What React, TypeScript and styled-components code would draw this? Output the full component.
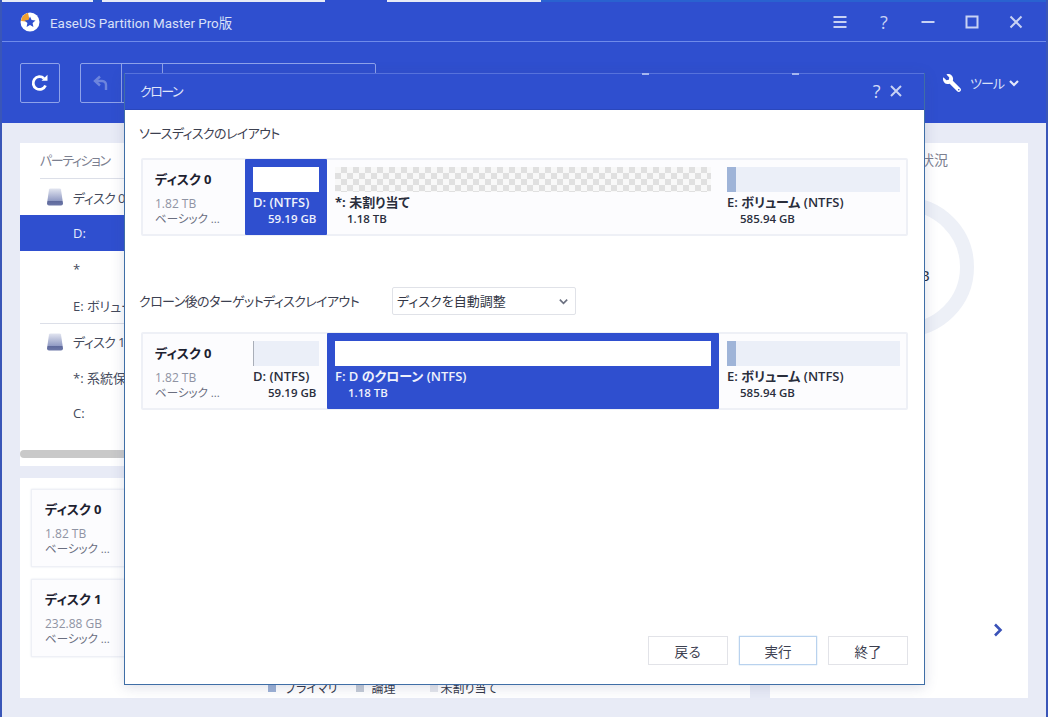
import React from "react";
import styled, { createGlobalStyle } from "styled-components";
import { FaWrench } from "react-icons/fa";

const Global = createGlobalStyle`
  html, body { margin: 0; padding: 0; background: #e8ebf6; }
  * { box-sizing: border-box; }
  body { font-family: "Open Sans", "Noto Sans CJK JP", sans-serif; font-feature-settings: "palt"; }
`;

const BLUE = "#2f4fcf";

const Page = styled.div`
  position: relative;
  width: 1048px;
  height: 717px;
  overflow: hidden;
  background: #e8ebf6;
  border-left: 2px solid #3a56b8;
  border-right: 2px solid #3a56b8;
  display: flex;
  flex-direction: column;
`;

const TopStrip = styled.div`
  height: 2px;
  margin: 0 -2px;
  flex: none;
  background: linear-gradient(
    90deg,
    #e8ebf6 0 93px,
    #2a55c8 93px 102px,
    #e8ebf6 102px 325px,
    #2f4fcf 325px 387px,
    #e8ebf6 387px 541px,
    #2a62d0 541px
  );
`;

const TitleBar = styled.header`
  height: 40px;
  flex: none;
  margin: 0 -2px;
  background: ${BLUE};
  border-bottom: 1px solid #6f8bea;
  display: flex;
  align-items: center;
  padding: 0 0 0 20px;
  color: #d9e0f8;
`;

const AppName = styled.span`
  margin-left: 10px;
  font-family: Roboto, "Noto Sans CJK JP", sans-serif;
  font-size: 13.4px;
`;

const WinControls = styled.div`
  margin-left: auto;
  display: flex;
  padding-right: 10px;
`;

const WinButton = styled.span`
  width: 44px;
  height: 24px;
  display: flex;
  align-items: center;
  justify-content: center;
  color: #c8d2f4;
  font-size: 18px;
`;

const Toolbar = styled.div`
  height: 81px;
  flex: none;
  margin: 0 -2px;
  background: ${BLUE};
  display: flex;
  align-items: center;
  padding: 0 28px 0 20px;
  position: relative;
`;

const ToolBtn = styled.div`
  width: 40px;
  height: 40px;
  border: 1px solid #8ea2ea;
  border-radius: 2px;
  display: flex;
  align-items: center;
  justify-content: center;
`;

const ToolGroup = styled.div`
  margin-left: 20px;
  width: 296px;
  height: 40px;
  border: 1px solid #8ea2ea;
  border-radius: 2px;
  display: flex;
`;

const GroupCell = styled.div`
  width: 41px;
  border-right: 1px solid #8ea2ea;
  display: flex;
  align-items: center;
  justify-content: center;
`;

const Spacer = styled.div`
  flex: 1;
`;

const PeekMark = styled.div<{ $left: number }>`
  position: absolute;
  z-index: 2;
  top: 31px;
  left: ${(p) => p.$left}px;
  width: 7px;
  height: 2px;
  background: #a5b6f0;
`;

const ToolMenu = styled.div`
  display: flex;
  align-items: center;
  color: #d9e0f8;
  font-size: 13px;
  letter-spacing: -1px;
`;

const ToolLabel = styled.span`
  margin: 0 4px 0 9px;
`;

const WrenchIcon = styled(FaWrench)`
  width: 18px;
  height: 18px;
  color: #fff;
  transform: scaleX(-1);
`;

const Main = styled.main`
  flex: 1;
  display: flex;
  gap: 20px;
  padding: 20px 18px 19px 18px;
  min-height: 0;
`;

const LeftCol = styled.div`
  width: 730px;
  flex: none;
  display: flex;
  flex-direction: column;
  gap: 12px;
`;

const TablePanel = styled.section`
  height: 323px;
  background: #fff;
  flex: none;
  position: relative;
  padding: 0 0 0 20px;
`;

const TableHead = styled.div`
  height: 36px;
  border-bottom: 1px solid #dcdfe8;
  font-size: 13px;
  letter-spacing: -1.4px;
  color: #7c8090;
  display: flex;
  align-items: center;
  padding-bottom: 2px;
`;

const DiskRow = styled.div<{ $lined?: boolean }>`
  height: 36px;
  display: flex;
  align-items: center;
  font-size: 13px;
  letter-spacing: -0.6px;
  color: #444a5c;
  gap: 10px;
  padding-left: 7px;
  ${(p) => (p.$lined ? "border-top: 1px solid #dcdfe8;" : "")}
`;

const PartRow = styled.div<{ $selected?: boolean }>`
  height: 36px;
  display: flex;
  align-items: center;
  font-size: 13px;
  padding-left: ${(p) => (p.$selected ? "53px" : "33px")};
  margin-left: ${(p) => (p.$selected ? "-20px" : "0")};
  color: ${(p) => (p.$selected ? "#e8ecfb" : "#444a5c")};
  background: ${(p) => (p.$selected ? BLUE : "transparent")};
`;

const Scrollbar = styled.div`
  position: absolute;
  left: 0;
  right: 0;
  top: 307px;
  height: 8px;
  background: #c9c9c9;
  border-radius: 4px;
`;

const CardsPanel = styled.section`
  flex: 1;
  background: #fff;
  padding: 11px;
  display: flex;
  flex-direction: column;
  gap: 12px;
  position: relative;
`;

const DiskCard = styled.div`
  height: 78px;
  width: 300px;
  border: 1px solid #eef0f6;
  background: #fcfcfe;
  box-shadow: 0 0 2px #e4e6ee;
  padding: 9px 13px;
`;

const DiskName = styled.div`
  font-size: 13px;
  font-weight: 700;
  color: #1d2130;
  line-height: 20px;
`;

const DiskSize = styled.div`
  font-size: 12px;
  color: #8f93a3;
  line-height: 15px;
  margin-top: 7px;
`;

const DiskType = styled.div`
  font-size: 11.5px;
  color: #6a6e80;
  line-height: 15px;
`;

const Legend = styled.div`
  position: absolute;
  left: 248px;
  top: 201px;
  display: flex;
  align-items: center;
  font-size: 12px;
  color: #333746;
`;

const Swatch = styled.span<{ $color: string; $gap: number; $after: number }>`
  width: 8px;
  height: 8px;
  background: ${(p) => p.$color};
  margin: 0 ${(p) => p.$after}px 0 ${(p) => p.$gap}px;
`;

const RightPanel = styled.section`
  flex: 1;
  background: #fff;
  position: relative;
  display: flex;
  flex-direction: column;
`;

const RightHead = styled.div`
  width: 178px;
  height: 36px;
  text-align: right;
  font-size: 14px;
  line-height: 34px;
  color: #7c8090;
`;

const DonutBox = styled.div`
  position: relative;
  width: 140px;
  height: 140px;
  margin: 18px 0 0 64px;
  border: 14px solid #edf0f7;
  border-radius: 50%;
  display: flex;
  align-items: center;
  justify-content: center;
  font-size: 15px;
  color: #2a2e3c;
  padding-top: 16px;
`;

const NextArrow = styled.div`
  position: absolute;
  left: 223px;
  top: 477px;
`;

/* dialog */
const Dialog = styled.div`
  position: absolute;
  left: 122px;
  top: 73px;
  width: 801px;
  height: 612px;
  background: #fff;
  border: 1px solid #3f6ea6;
  border-top: none;
  box-shadow: 0 2px 12px rgba(60, 70, 120, 0.18);
  display: flex;
  flex-direction: column;
`;

const DialogHead = styled.div`
  height: 37px;
  flex: none;
  background: ${BLUE};
  border-top: 1px solid #5672dc;
  border-bottom: 1px solid #2a47bc;
  display: flex;
  align-items: center;
  padding: 0 20px 2px 15px;
  color: #e0e6fa;
  font-size: 13px;
  letter-spacing: -1.5px;
`;

const DialogTitle = styled.span`
  flex: 1;
`;

const HeadIcons = styled.div`
  display: flex;
  gap: 9px;
  align-items: center;
  color: #d4dcf7;
  font-size: 18px;
`;

const DialogBody = styled.div`
  flex: 1;
  display: flex;
  flex-direction: column;
  padding: 0 16px 19px 16px;
`;

const SectionLabel = styled.div<{ $top: number }>`
  margin-top: ${(p) => p.$top}px;
  height: 20px;
  line-height: 20px;
  font-size: 13px;
  color: #3c4050;
  display: flex;
  align-items: center;
`;

const LabelText = styled.span`
  width: 251px;
  flex: none;
  margin-left: -2px;
  margin-right: 2px;
  white-space: nowrap;
  letter-spacing: -0.6px;
`;

const Select = styled.div`
  width: 184px;
  height: 28px;
  border: 1px solid #e0e2e8;
  border-radius: 2px;
  display: flex;
  align-items: center;
  justify-content: space-between;
  padding: 0 6px 0 4px;
  color: #333746;
  font-size: 13px;
  flex: none;
`;

const Layout = styled.div<{ $top: number }>`
  margin-top: ${(p) => p.$top}px;
  height: 78px;
  border: 2px solid #eef0f6;
  border-radius: 2px;
  background: #fcfcfe;
  display: flex;
  flex: none;
`;

const LayoutInfo = styled.div`
  width: 102px;
  flex: none;
  padding: 9px 0 0 12px;
`;

const Partition = styled.div<{ $width: number; $active?: boolean }>`
  width: ${(p) => p.$width}px;
  flex: none;
  margin: -1px 0;
  padding: 8px 8px 0 8px;
  background: ${(p) => (p.$active ? BLUE : "transparent")};
  color: ${(p) => (p.$active ? "#eef1fc" : "#2a2e3c")};
  border-radius: 1px;
`;

const Bar = styled.div<{ $kind: "white" | "free" | "used" | "thin" }>`
  height: 25px;
  background: ${(p) =>
    p.$kind === "white"
      ? "#fff"
      : p.$kind === "free"
        ? "conic-gradient(#e0e0e0 25%, #f8f8f8 0 50%, #e0e0e0 0 75%, #f8f8f8 0) 0 0 / 12px 12px"
        : p.$kind === "used"
          ? "linear-gradient(90deg, #9fb4d8 0 9px, #ebeff8 9px)"
          : "linear-gradient(90deg, #a9aeb8 0 1px, #ebeff8 1px)"};
`;

const PartName = styled.div<{ $bold?: boolean }>`
  margin-top: 2px;
  font-size: 13px;
  line-height: 17px;
  font-weight: ${(p) => (p.$bold ? 700 : 600)};
  white-space: nowrap;
`;

const PartSize = styled.div<{ $indent: number }>`
  font-size: 11.5px;
  line-height: 16px;
  font-weight: 600;
  padding-left: ${(p) => p.$indent}px;
  white-space: nowrap;
`;

const Actions = styled.div`
  margin-top: auto;
  display: flex;
  justify-content: flex-end;
  gap: 10px;
`;

const ActionBtn = styled.button<{ $focus?: boolean }>`
  width: ${(p) => (p.$focus ? "78px" : "80px")};
  height: 29px;
  margin: 0 ${(p) => (p.$focus ? "1px" : "0")};
  padding: 0;
  background: #fff;
  border: 1px solid ${(p) => (p.$focus ? "#b9d2ee" : "#e2e3e8")};
  ${(p) => (p.$focus ? "box-shadow: 0 0 1px #9cc0e6;" : "")}
  font-family: "Noto Sans CJK JP", sans-serif;
  font-size: 13.5px;
  color: #3c4050;
`;

const Logo = () => (
  <svg width="20" height="20" viewBox="0 0 20 20">
    <circle cx="10" cy="10" r="9.5" fill="#fff" />
    <path d="M10 10 L1 9 A9.5 9.5 0 0 1 8 0.7 Z" fill="#f0a030" />
    <path d="M10 4.5l1.6 3.6 3.9.4-2.9 2.6.8 3.9-3.4-2-3.4 2 .8-3.9-2.9-2.6 3.9-.4z" fill="#2f4fcf" />
  </svg>
);

const Refresh = () => (
  <svg width="20" height="20" viewBox="0 0 20 20" fill="none">
    <path d="M15.5 12.5A6.4 6.4 0 1 1 14 5.4" stroke="#fff" strokeWidth="2.8" />
    <path d="M11.5 7.8h6v-6z" fill="#fff" />
  </svg>
);

const Undo = () => (
  <svg width="18" height="18" viewBox="0 0 18 18" fill="none" stroke="#6d85dd" strokeWidth="2.4">
    <path d="M8 2.5L3 7l5 4.5" />
    <path d="M3.5 7H10c3 0 4 2 4 4v5" />
  </svg>
);

const Chevron = ({ color, size = 12, weight = 2.2 }: { color: string; size?: number; weight?: number }) => (
  <svg width={size} height={size} viewBox="0 0 12 12" fill="none" stroke={color} strokeWidth={weight}>
    <path d="M2 4l4 4 4-4" />
  </svg>
);

const DiskIcon = () => (
  <svg width="16" height="18" viewBox="0 0 16 18">
    <defs>
      <linearGradient id="dk" x1="0" y1="0" x2="0" y2="1">
        <stop offset="0" stopColor="#e2e5f0" />
        <stop offset="0.75" stopColor="#8e98c2" />
        <stop offset="0.76" stopColor="#5f6a9c" />
        <stop offset="1" stopColor="#6d78a8" />
      </linearGradient>
    </defs>
    <path d="M2 1.5Q2.2 0.5 3.5 0.5h9Q13.8 0.5 14 1.5l2 14q0 2-2 2H2q-2 0-2-2z" fill="url(#dk)" />
  </svg>
);

const Line = ({ d, w = 2 }: { d: string; w?: number }) => (
  <svg width="16" height="16" viewBox="0 0 16 16" fill="none" stroke="#c8d2f4" strokeWidth={w}>
    <path d={d} />
  </svg>
);

const InfoCol = ({ name, size, type }: { name: string; size: string; type: string }) => (
  <>
    <DiskName>{name}</DiskName>
    <DiskSize>{size}</DiskSize>
    <DiskType>{type}</DiskType>
  </>
);

export default function App() {
  return (
    <Page>
      <Global />
      <TopStrip />
      <TitleBar>
        <Logo />
        <AppName>EaseUS Partition Master Pro版</AppName>
        <WinControls>
          <WinButton>
            <Line d="M1.5 3h13M1.5 8h13M1.5 13h13" />
          </WinButton>
          <WinButton>?</WinButton>
          <WinButton>
            <Line d="M1.5 8h13" />
          </WinButton>
          <WinButton>
            <Line d="M2.5 2.5h11v11h-11z" />
          </WinButton>
          <WinButton>
            <Line d="M2.5 2.5l11 11M13.5 2.5l-11 11" />
          </WinButton>
        </WinControls>
      </TitleBar>
      <Toolbar>
        <ToolBtn>
          <Refresh />
        </ToolBtn>
        <ToolGroup>
          <GroupCell>
            <Undo />
          </GroupCell>
          <GroupCell />
        </ToolGroup>
        <PeekMark $left={642} />
        <PeekMark $left={792} />
        <Spacer />
        <ToolMenu>
          <WrenchIcon />
          <ToolLabel>ツール</ToolLabel>
          <Chevron color="#e4e9fb" />
        </ToolMenu>
      </Toolbar>
      <Main>
        <LeftCol>
          <TablePanel>
            <TableHead>パーティション</TableHead>
            <DiskRow>
              <DiskIcon />
              ディスク 0
            </DiskRow>
            <PartRow $selected>D:</PartRow>
            <PartRow>*</PartRow>
            <PartRow>E: ボリューム</PartRow>
            <DiskRow $lined>
              <DiskIcon />
              ディスク 1
            </DiskRow>
            <PartRow>*: 系統保留</PartRow>
            <PartRow>C:</PartRow>
            <Scrollbar />
          </TablePanel>
          <CardsPanel>
            <DiskCard>
              <InfoCol name="ディスク 0" size="1.82 TB" type="ベーシック ..." />
            </DiskCard>
            <DiskCard>
              <InfoCol name="ディスク 1" size="232.88 GB" type="ベーシック ..." />
            </DiskCard>
            <Legend>
              <Swatch $color="#9db2d6" $gap={0} $after={9} />
              プライマリ
              <Swatch $color="#c4cbd6" $gap={18} $after={8} />
              論理
              <Swatch $color="#e4e6ec" $gap={34} $after={3} />
              未割り当て
            </Legend>
          </CardsPanel>
        </LeftCol>
        <RightPanel>
          <RightHead>ディスクの状況</RightHead>
          <DonutBox>1.82 TB</DonutBox>
          <NextArrow>
            <svg width="10" height="14" viewBox="0 0 10 14" fill="none" stroke="#3a52b8" strokeWidth="2.6">
              <path d="M2 1.5L7.5 7 2 12.5" />
            </svg>
          </NextArrow>
        </RightPanel>
      </Main>
      <Dialog>
        <DialogHead>
          <DialogTitle>クローン</DialogTitle>
          <HeadIcons>
            <span>?</span>
            <Line d="M3 3l10 10M13 3L3 13" />
          </HeadIcons>
        </DialogHead>
        <DialogBody>
          <SectionLabel $top={13}>
            <LabelText>ソースディスクのレイアウト</LabelText>
          </SectionLabel>
          <Layout $top={15}>
            <LayoutInfo>
              <InfoCol name="ディスク 0" size="1.82 TB" type="ベーシック ..." />
            </LayoutInfo>
            <Partition $width={82} $active>
              <Bar $kind="white" />
              <PartName>D: (NTFS)</PartName>
              <PartSize $indent={15}>59.19 GB</PartSize>
            </Partition>
            <Partition $width={392}>
              <Bar $kind="free" />
              <PartName $bold>*: 未割り当て</PartName>
              <PartSize $indent={12}>1.18 TB</PartSize>
            </Partition>
            <Partition $width={189}>
              <Bar $kind="used" />
              <PartName>E: ボリューム (NTFS)</PartName>
              <PartSize $indent={13}>585.94 GB</PartSize>
            </Partition>
          </Layout>
          <SectionLabel $top={55}>
            <LabelText>クローン後のターゲットディスクレイアウト</LabelText>
            <Select>
              ディスクを自動調整
              <Chevron color="#6b7080" size={11} weight={1.8} />
            </Select>
          </SectionLabel>
          <Layout $top={21}>
            <LayoutInfo>
              <InfoCol name="ディスク 0" size="1.82 TB" type="ベーシック ..." />
            </LayoutInfo>
            <Partition $width={82}>
              <Bar $kind="thin" />
              <PartName>D: (NTFS)</PartName>
              <PartSize $indent={15}>59.19 GB</PartSize>
            </Partition>
            <Partition $width={392} $active>
              <Bar $kind="white" />
              <PartName>F: D のクローン (NTFS)</PartName>
              <PartSize $indent={13}>1.18 TB</PartSize>
            </Partition>
            <Partition $width={189}>
              <Bar $kind="used" />
              <PartName>E: ボリューム (NTFS)</PartName>
              <PartSize $indent={13}>585.94 GB</PartSize>
            </Partition>
          </Layout>
          <Actions>
            <ActionBtn>戻る</ActionBtn>
            <ActionBtn $focus>実行</ActionBtn>
            <ActionBtn>終了</ActionBtn>
          </Actions>
        </DialogBody>
      </Dialog>
    </Page>
  );
}
